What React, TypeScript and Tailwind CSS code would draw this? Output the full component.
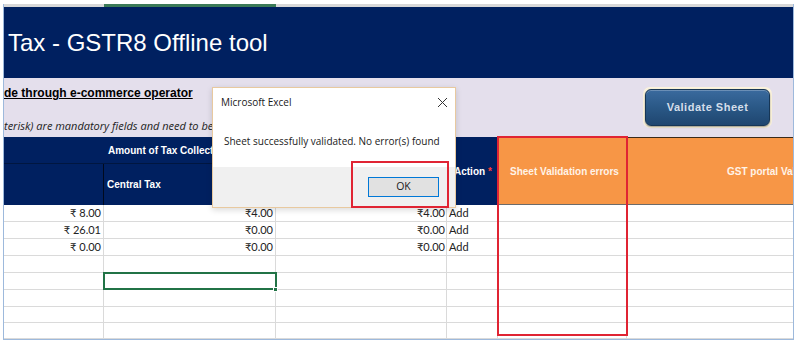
import React from "react";

const rows = [
  { a: "₹ 8.00", b: "₹4.00", c: "₹4.00", d: "Add" },
  { a: "₹ 26.01", b: "₹0.00", c: "₹0.00", d: "Add" },
  { a: "₹ 0.00", b: "₹0.00", c: "₹0.00", d: "Add" },
  { a: "", b: "", c: "", d: "" },
  { a: "", b: "", c: "", d: "", selected: true },
  { a: "", b: "", c: "", d: "" },
  { a: "", b: "", c: "", d: "" },
  { a: "", b: "", c: "", d: "" },
];

const rowHeights = ["h-[17px]", "h-[17px]", "h-[17px]", "h-[17px]", "h-[17px]", "h-[17px]", "h-[16px]", "h-[16px]"];

function ValidateButton() {
  return (
    <div className="p-[2px] rounded-[7px] bg-[#fbf3dc]">
      <button className="w-[125px] h-[37px] rounded-[6px] border border-[#163656] bg-gradient-to-b from-[#3a6a9e] via-[#2a5886] to-[#1f4670] shadow-[inset_0_1px_0_rgba(255,255,255,0.25),0_1px_2px_rgba(0,0,0,0.4)] text-[11px] font-bold tracking-[0.5px] text-[#d4deea]">
        Validate Sheet
      </button>
    </div>
  );
}

function Dialog() {
  return (
    <div className="absolute left-[212px] top-[87px] w-[244px] h-[121px] bg-white border border-[#e8c99f] shadow-[0_2px_6px_rgba(0,0,0,0.15)] flex flex-col font-['Open_Sans',sans-serif] text-[#1a1a1a]">
      <div className="h-[28px] flex items-center justify-between pl-[8px] pr-[7px]">
        <span className="text-[10px]">Microsoft Excel</span>
        <svg width="11" height="11" viewBox="0 0 11 11" className="text-[#333]">
          <path d="M1 1 L10 10 M10 1 L1 10" stroke="currentColor" strokeWidth="1" />
        </svg>
      </div>
      <div className="flex-1 flex items-center pl-[11px] text-[10px]">
        Sheet successfully validated. No error(s) found
      </div>
      <div className="h-[40px] bg-[#f0f0f0] flex items-start justify-end pt-[10px] pr-[16px]">
        <div className="w-[71px] h-[20px] border border-[#0078d7] bg-[#e1e1e1] flex items-center justify-center text-[10.5px]">
          OK
        </div>
      </div>
    </div>
  );
}

export default function App() {
  return (
    <div className="relative w-[805px] h-[345px] bg-white overflow-hidden font-['Liberation_Sans',Arial,sans-serif]">
      <div className="h-[4px]" />
      <div className="ml-[3px] w-[791px] border-x border-b border-[#9db9dc]">
        {/* column header strip */}
        <div className="h-[3px] flex bg-[#d8d8d8]">
          <div className="w-[100px]" />
          <div className="w-[172px] bg-[#3b7a57]" />
        </div>

        {/* banner */}
        <div className="h-[71px] bg-[#002060] flex items-center pl-[4px]">
          <h1 className="text-[24px] text-white whitespace-nowrap">Tax - GSTR8 Offline tool</h1>
        </div>

        {/* info strip */}
        <div className="h-[59px] bg-[#e4dfec] flex justify-between">
          <div className="flex flex-col pt-[8px] whitespace-nowrap">
            <p className="text-[12px] font-bold underline text-black leading-[14px]">de through e-commerce operator</p>
            <p className="mt-[19px] text-[11px] italic text-[#222] font-['Open_Sans',sans-serif] leading-[14px]">
              terisk) are mandatory fields and need to be filled
            </p>
          </div>
          <div className="pt-[9px] pr-[21px]">
            <ValidateButton />
          </div>
        </div>

        {/* table header */}
        <div className="h-[68px] flex text-[10px] font-bold">
          <div className="w-[494px] grid grid-cols-[100px_172px_171px_51px] grid-rows-[27px_41px] bg-[#002060] text-white">
            <div className="col-span-3 flex items-center pl-[104px] border-b border-[#001640] whitespace-nowrap">
              Amount of Tax Collected
            </div>
            <div className="row-span-2 col-start-4 row-start-1 flex items-center pl-[7px]">
              Action<span className="text-[#ff3b3b] ml-[3px]">*</span>
            </div>
            <div className="border-r border-[#000a1e]" />
            <div className="flex items-center pl-[3px]">Central Tax</div>
            <div className="flex items-center pl-[3px]">State/UT Tax</div>
          </div>
          <div className="w-[295px] flex bg-[#f79646] border-l border-[#1a1a1a] border-t border-t-[#3a2a1a] border-b border-b-[#6b6b6b] text-[#fff3e8]">
            <div className="w-[128px] flex items-center pl-[11px] whitespace-nowrap">Sheet Validation errors</div>
            <div className="flex-1 flex items-center pl-[100px] whitespace-nowrap overflow-hidden">
              GST portal Validation errors
            </div>
          </div>
        </div>

        {/* rows */}
        <div className="font-['Lato','Noto_Sans',sans-serif] text-[11px] text-[#222]">
          {rows.map((r, i) => (
            <div key={i} className={`${rowHeights[i]} flex border-b border-[#dadada]`}>
              <div className="w-[100px] border-r border-[#dadada] flex items-center justify-end pr-[2px]">{r.a}</div>
              <div
                className={`w-[172px] border-r border-[#dadada] flex items-center justify-end pr-[2px] ${
                  r.selected ? "relative outline-2 outline-[#217346] outline-offset-[-1px]" : ""
                }`}
              >
                {r.b}
                {r.selected && <span className="absolute right-[-3px] bottom-[-3px] w-[5px] h-[5px] bg-[#217346] border border-white" />}
              </div>
              <div className="w-[171px] border-r border-[#dadada] flex items-center justify-end pr-[1px]">{r.c}</div>
              <div className="w-[51px] border-r border-[#dadada] flex items-center pl-[2px]">{r.d}</div>
              <div className="w-[129px] border-r border-[#dadada]" />
              <div className="flex-1" />
            </div>
          ))}
        </div>
      </div>

      {/* annotations */}
      <div className="absolute left-[497px] top-[136px] w-[131px] h-[200px] border-2 border-[#e02433]" />
      <Dialog />
      <div className="absolute left-[351px] top-[161px] w-[98px] h-[47px] border-2 border-[#e02433]" />
    </div>
  );
}
